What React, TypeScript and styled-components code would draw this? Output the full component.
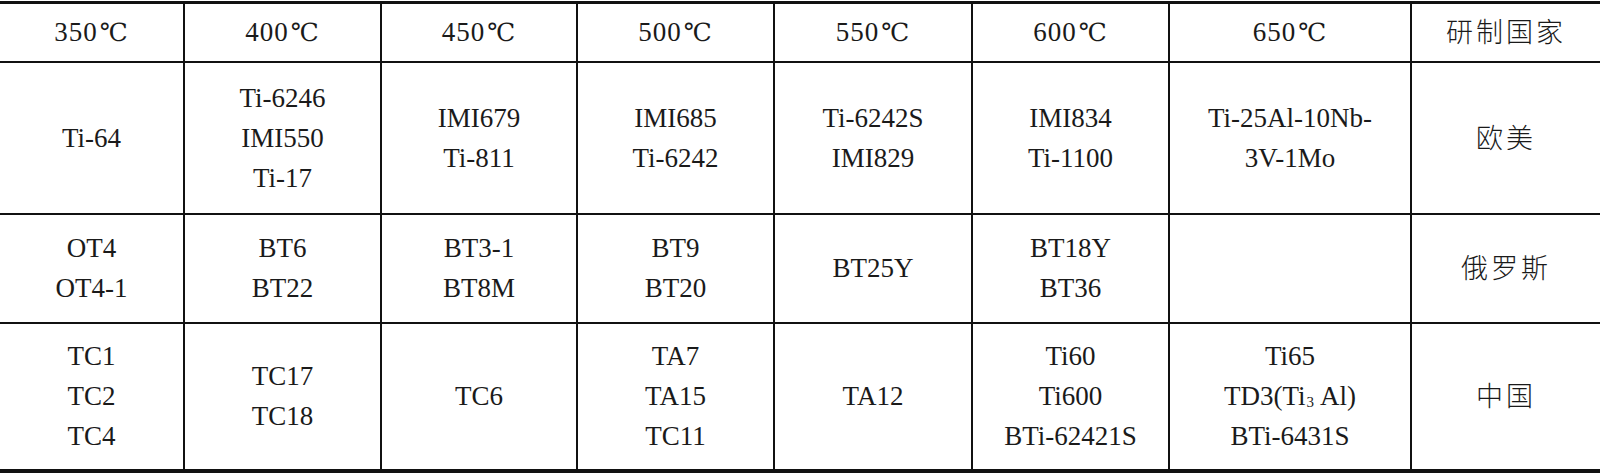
import React from 'react';
import styled, { createGlobalStyle } from 'styled-components';

const GlobalStyle = createGlobalStyle`
  html, body {
    margin: 0;
    padding: 0;
    background: #ffffff;
    overflow: hidden;
  }
`;

const Page = styled.div`
  width: 1600px;
  padding-top: 1px;
  background: #ffffff;
`;

const Table = styled.table`
  width: 1600px;
  table-layout: fixed;
  border-collapse: collapse;
  border-top: 3px solid #111;
  border-bottom: 4px solid #111;
  font-family: 'Liberation Serif', 'Noto Sans CJK SC', serif;
  font-size: 27px;
  color: #1a1a1a;
`;

const Row = styled.tr<{ h: number }>`
  height: ${p => p.h}px;
`;

const Cell = styled.td<{ last?: boolean }>`
  padding: 0;
  text-align: center;
  vertical-align: middle;
  line-height: 40px;
  border-bottom: 2px solid #111;
  border-right: ${p => (p.last ? 'none' : '2px solid #111')};
`;

const HeadCell = styled(Cell)`
  letter-spacing: 1px;
`;

const Degree = styled.span`
  font-family: 'DejaVu Serif', 'Noto Sans CJK SC', serif;
  font-size: 25px;
  margin-left: 2px;
`;

const Cjk = styled.span`
  font-family: 'Noto Sans CJK SC', sans-serif;
  font-weight: 300;
  font-size: 27px;
  letter-spacing: 3px;
`;

const Sub = styled.sub`
  font-size: 15px;
  line-height: 0;
  vertical-align: -2px;
  margin: 0 6px 0 1px;
`;

const widths = [184, 197, 196, 197, 198, 197, 242, 189];
const temps = ['350', '400', '450', '500', '550', '600', '650'];

type RowData = { h: number; cells: React.ReactNode[][]; country: string };

const rows: RowData[] = [
  {
    h: 152,
    cells: [
      ['Ti-64'],
      ['Ti-6246', 'IMI550', 'Ti-17'],
      ['IMI679', 'Ti-811'],
      ['IMI685', 'Ti-6242'],
      ['Ti-6242S', 'IMI829'],
      ['IMI834', 'Ti-1100'],
      ['Ti-25Al-10Nb-', '3V-1Mo'],
    ],
    country: '欧美',
  },
  {
    h: 109,
    cells: [
      ['OT4', 'OT4-1'],
      ['BT6', 'BT22'],
      ['BT3-1', 'BT8M'],
      ['BT9', 'BT20'],
      ['BT25Y'],
      ['BT18Y', 'BT36'],
      [],
    ],
    country: '俄罗斯',
  },
  {
    h: 148,
    cells: [
      ['TC1', 'TC2', 'TC4'],
      ['TC17', 'TC18'],
      ['TC6'],
      ['TA7', 'TA15', 'TC11'],
      ['TA12'],
      ['Ti60', 'Ti600', 'BTi-62421S'],
      [
        'Ti65',
        <>
          TD3(Ti<Sub>3</Sub>Al)
        </>,
        'BTi-6431S',
      ],
    ],
    country: '中国',
  },
];

export default function App() {
  return (
    <Page>
      <GlobalStyle />
      <Table>
        <colgroup>
          {widths.map((w, i) => (
            <col key={i} style={{ width: w }} />
          ))}
        </colgroup>
        <tbody>
          <Row h={59}>
            {temps.map(t => (
              <HeadCell key={t}>
                {t}
                <Degree>℃</Degree>
              </HeadCell>
            ))}
            <HeadCell last>
              <Cjk>研制国家</Cjk>
            </HeadCell>
          </Row>
          {rows.map(r => (
            <Row key={r.country} h={r.h}>
              {r.cells.map((lines, i) => (
                <Cell key={i}>
                  {lines.map((l, j) => (
                    <div key={j}>{l}</div>
                  ))}
                </Cell>
              ))}
              <Cell last>
                <Cjk>{r.country}</Cjk>
              </Cell>
            </Row>
          ))}
        </tbody>
      </Table>
    </Page>
  );
}
